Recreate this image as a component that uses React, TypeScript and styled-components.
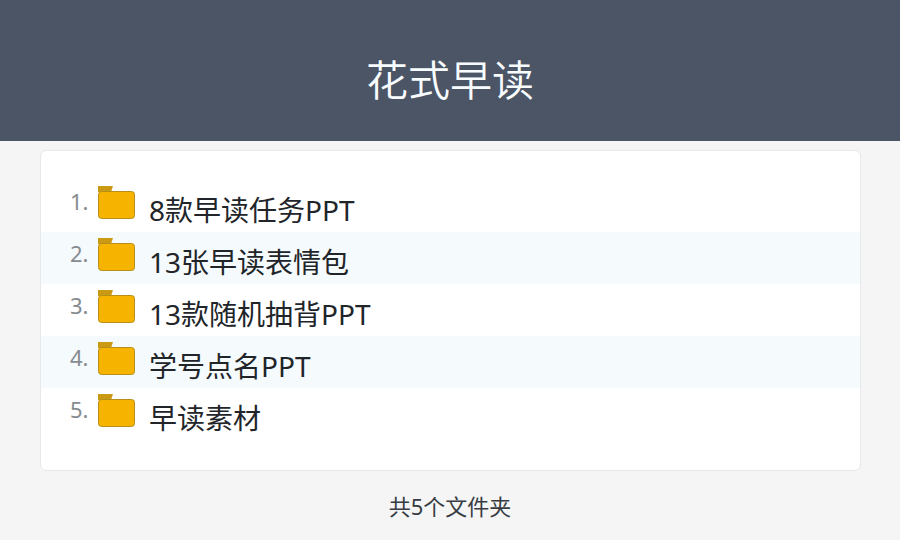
import React from "react";
import styled, { createGlobalStyle } from "styled-components";

const GlobalStyle = createGlobalStyle`
  * {
    box-sizing: border-box;
  }
  body {
    margin: 0;
    background: #f5f5f5;
    color: #212529;
    font-family: "Noto Sans", "Noto Sans CJK SC", sans-serif;
  }
`;

const Header = styled.header`
  display: flex;
  justify-content: center;
  padding: 48px 40px 29px;
  background: #4b5565;
`;

const Title = styled.h1`
  margin: 0;
  color: #f8fcff;
  font-size: 42px;
  font-weight: 350;
  line-height: 64px;
`;

const Card = styled.main`
  margin: 9px 39px 0 40px;
  padding: 29px 0 30px;
  background: #ffffff;
  border: 1px solid #e6e8ea;
  border-radius: 6px;
`;

const FolderList = styled.ol`
  margin: 0;
  padding: 0;
  list-style: none;
`;

const Row = styled.li<{ $tinted: boolean }>`
  display: flex;
  align-items: flex-start;
  height: 52px;
  padding: 0 29px;
  background: ${({ $tinted }) => ($tinted ? "#f5fafd" : "transparent")};
`;

const Index = styled.span`
  width: 28px;
  padding-top: 5px;
  color: #868b90;
  font-size: 22px;
  line-height: 32px;
`;

const FolderIcon = styled.svg`
  flex: none;
  width: 37px;
  height: 33px;
  margin: 6px 14px 0 0;
`;

const Name = styled.span`
  padding-top: 10px;
  font-size: 28px;
  line-height: 40px;
`;

const Summary = styled.footer`
  padding: 19px 40px 0;
  color: #363c42;
  font-size: 22px;
  line-height: 32px;
  text-align: center;
`;

const folders = [
  "8款早读任务PPT",
  "13张早读表情包",
  "13款随机抽背PPT",
  "学号点名PPT",
  "早读素材",
];

function Folder() {
  return (
    <FolderIcon viewBox="0 0 37 33" aria-hidden="true">
      <path d="M0 0H15L13 6H0Z" fill="#cb9a14" />
      <rect x="0.5" y="5.5" width="36" height="27" rx="3" fill="#f6b400" stroke="#b78e18" />
    </FolderIcon>
  );
}

export default function App() {
  return (
    <>
      <GlobalStyle />
      <Header>
        <Title>花式早读</Title>
      </Header>
      <Card>
        <FolderList>
          {folders.map((name, i) => (
            <Row key={name} $tinted={i % 2 === 1}>
              <Index>{i + 1}.</Index>
              <Folder />
              <Name>{name}</Name>
            </Row>
          ))}
        </FolderList>
      </Card>
      <Summary>共{folders.length}个文件夹</Summary>
    </>
  );
}
